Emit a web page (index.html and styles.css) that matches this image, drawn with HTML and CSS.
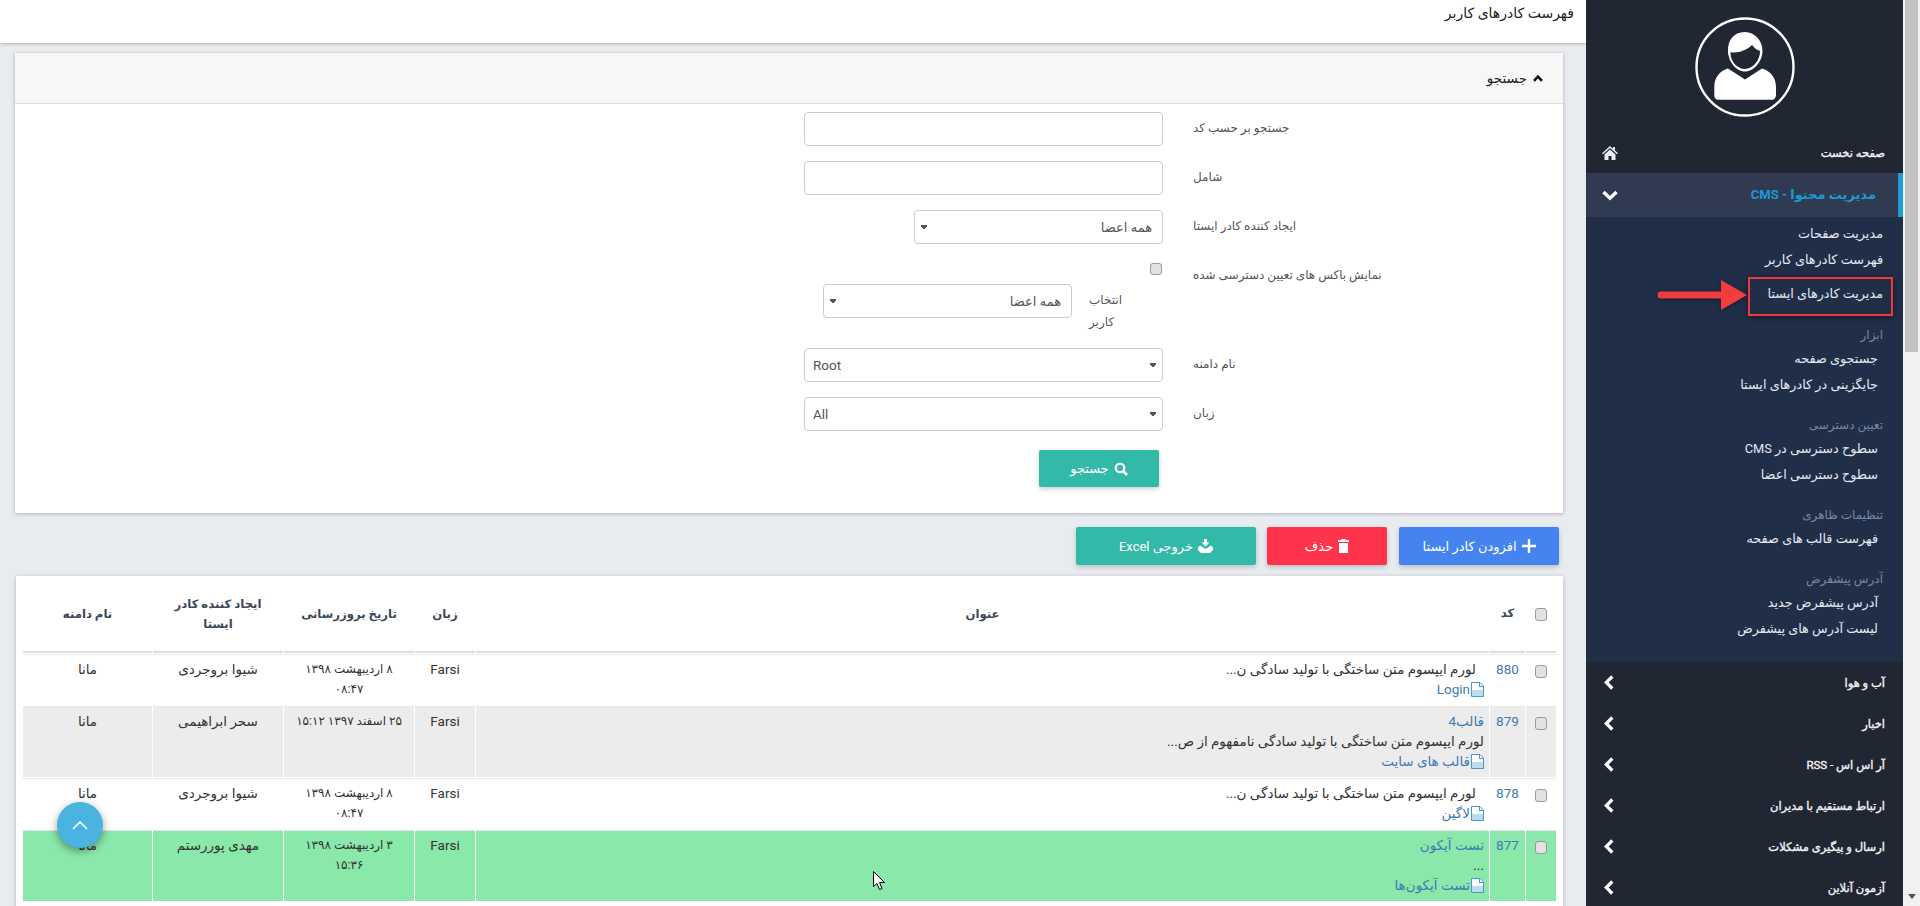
FILE: index.html
```html
<!DOCTYPE html>
<html lang="fa" dir="rtl">
<head>
<meta charset="utf-8">
<title>فهرست کادرهای کاربر</title>
<link rel="stylesheet" href="styles.css">
</head>
<body>
<div class="scrollbar"><div class="thumb"></div><div class="track"></div><div class="scroll-down"></div></div>

<aside class="sidebar">
  <div class="avatar">
    <svg width="100" height="100" viewBox="0 0 100 100"><circle cx="50" cy="50" r="48.5" fill="none" stroke="#fff" stroke-width="2.4"/><path fill="#fff" d="M50 15C38 15 32.7 24 33 34C33 44 41 54.5 50 54.5C59 54.5 67.5 44 67.5 34C67.5 24 60 15 50 15Z"/><path fill="#202632" d="M35.5 35C42 37 52 33 57 28C60 32 63 33 65 34C65.5 43 57.5 52 50 52C42 52 35 44 35.5 35Z"/><path fill="#fff" d="M33 51.5L50 62.6L67 51.5C75 54 81 60 81 70L81 78C81 81 79 82.7 77 82.7L23 82.7C21 82.7 19.3 81 19.3 78L19.3 70C19.3 60 25 54 33 51.5Z"/></svg>
  </div>
  <nav>
    <a class="nav-row"><span>صفحه نخست</span><svg class="nav-icon" width="16" height="14" viewBox="0 0 16 14"><path fill="#e6eef6" d="M8 0L11 2.7V1H13V4.5L16 7.2L15 8.2L8 2L1 8.2L0 7.2ZM8 3.6L13.5 8.4V14H9.5V10H6.5V14H2.5V8.4Z"/></svg></a>
    <a class="nav-row nav-active"><span>مدیریت محتوا - CMS</span><svg class="nav-icon" width="16" height="11" viewBox="0 0 16 11"><path fill="none" stroke="#fff" stroke-width="3.4" d="M1.5 2L8 8.2L14.5 2"/></svg></a>
    <div class="sub">
      <a class="sub-item">مدیریت صفحات</a>
      <a class="sub-item">فهرست کادرهای کاربر</a>
      <a class="sub-item sub-marked">مدیریت کادرهای ایستا</a>
      <div class="sub-group">
        <div class="group-title">ابزار</div>
        <a class="sub-item inset">جستجوی صفحه</a>
        <a class="sub-item inset">جایگزینی در کادرهای ایستا</a>
      </div>
      <div class="sub-group">
        <div class="group-title">تعیین دسترسی</div>
        <a class="sub-item inset">سطوح دسترسی در CMS</a>
        <a class="sub-item inset">سطوح دسترسی اعضا</a>
      </div>
      <div class="sub-group">
        <div class="group-title">تنظیمات ظاهری</div>
        <a class="sub-item inset">فهرست قالب های صفحه</a>
      </div>
      <div class="sub-group">
        <div class="group-title">آدرس پیشفرض</div>
        <a class="sub-item inset">آدرس پیشفرض جدید</a>
        <a class="sub-item inset">لیست آدرس های پیشفرض</a>
      </div>
    </div>
    <a class="nav-row"><span>آب و هوا</span><svg class="nav-icon chev" width="10" height="15" viewBox="0 0 10 15"><path fill="none" stroke="#fff" stroke-width="3.2" d="M8.3 1.5L2.3 7.5L8.3 13.5"/></svg></a>
    <a class="nav-row"><span>اخبار</span><svg class="nav-icon chev" width="10" height="15" viewBox="0 0 10 15"><path fill="none" stroke="#fff" stroke-width="3.2" d="M8.3 1.5L2.3 7.5L8.3 13.5"/></svg></a>
    <a class="nav-row"><span>آر اس اس - RSS</span><svg class="nav-icon chev" width="10" height="15" viewBox="0 0 10 15"><path fill="none" stroke="#fff" stroke-width="3.2" d="M8.3 1.5L2.3 7.5L8.3 13.5"/></svg></a>
    <a class="nav-row"><span>ارتباط مستقیم با مدیران</span><svg class="nav-icon chev" width="10" height="15" viewBox="0 0 10 15"><path fill="none" stroke="#fff" stroke-width="3.2" d="M8.3 1.5L2.3 7.5L8.3 13.5"/></svg></a>
    <a class="nav-row"><span>ارسال و پیگیری مشکلات</span><svg class="nav-icon chev" width="10" height="15" viewBox="0 0 10 15"><path fill="none" stroke="#fff" stroke-width="3.2" d="M8.3 1.5L2.3 7.5L8.3 13.5"/></svg></a>
    <a class="nav-row"><span>آزمون آنلاین</span><svg class="nav-icon chev" width="10" height="15" viewBox="0 0 10 15"><path fill="none" stroke="#fff" stroke-width="3.2" d="M8.3 1.5L2.3 7.5L8.3 13.5"/></svg></a>
  </nav>
  <div class="mark-box"></div>
  <svg class="mark-arrow" width="92" height="32" viewBox="0 0 92 32"><path fill="#f23d3f" d="M5 12.500H65V1L91 16L65 31V19.500H5A3.500 3.500 0 0 1 5 12.500Z"/></svg>
</aside>

<main class="main">
  <header class="page-head">فهرست کادرهای کاربر</header>

  <section class="card search-card">
    <div class="card-head">
      <svg width="10" height="8" viewBox="0 0 10 8"><path fill="none" stroke="#111" stroke-width="2.600" d="M1 6.800L5 2.600L9 6.800"/></svg>
      <span>جستجو</span>
    </div>
    <form class="form">
      <div class="row"><label class="label">جستجو بر حسب کد</label><div class="field"><input class="ctl" type="text"></div></div>
      <div class="row"><label class="label">شامل</label><div class="field"><input class="ctl" type="text"></div></div>
      <div class="row"><label class="label">ایجاد کننده کادر ایستا</label><div class="field"><select class="ctl short"><option>همه اعضا</option></select></div></div>
      <div class="row row-check">
        <label class="label">نمایش باکس های تعیین دسترسی شده</label>
        <div class="field">
          <input class="check form-check" type="checkbox">
          <div class="subrow"><label class="sublabel">انتخاب کاربر</label><select class="ctl short"><option>همه اعضا</option></select></div>
        </div>
      </div>
      <div class="row"><label class="label">نام دامنه</label><div class="field"><select class="ctl ltr"><option>Root</option></select></div></div>
      <div class="row"><label class="label">زبان</label><div class="field"><select class="ctl ltr"><option>All</option></select></div></div>
      <div class="row row-submit"><div class="spacer"></div><div class="field"><button class="btn btn-teal btn-search" type="button"><svg width="14" height="14" viewBox="0 0 14 14"><circle cx="6" cy="6" r="4.300" fill="none" stroke="#fff" stroke-width="2.300"/><path stroke="#fff" stroke-width="2.600" d="M9 9L13 13"/></svg>جستجو</button></div></div>
    </form>
  </section>

  <div class="toolbar">
    <button class="btn btn-blue" type="button"><svg width="14" height="14" viewBox="0 0 14 14"><path stroke="#fff" stroke-width="2.400" d="M7 0V14M0 7H14"/></svg>افزودن کادر ایستا</button>
    <button class="btn btn-red" type="button"><svg width="11" height="14" viewBox="0 0 11 14"><path fill="#fff" d="M3.500 0H7.500V1H11V3H0V1H3.500ZM1 4H10V14H1Z"/></svg>حذف</button>
    <button class="btn btn-teal btn-excel" type="button"><svg width="15" height="14" viewBox="0 0 15 14"><path fill="#fff" d="M6 0H9V3.500H11.500L7.500 7.500L3.500 3.500H6ZM2 6.500L7.500 10L13 6.500L15 8.500V11L12 14H3L0 11V8.500Z"/></svg>خروجی Excel</button>
  </div>

  <section class="card table-card">
    <table class="grid">
      <thead>
        <tr>
          <th class="c-check"><input class="check" type="checkbox"></th>
          <th class="c-code">کد</th>
          <th>عنوان</th>
          <th class="c-lang">زبان</th>
          <th class="c-date">تاریخ بروزرسانی</th>
          <th class="c-user">ایجاد کننده کادر ایستا</th>
          <th class="c-domain">نام دامنه</th>
        </tr>
      </thead>
      <tbody>
        <tr>
          <td class="c-check"><input class="check" type="checkbox"></td>
          <td class="c-code"><a class="link">880</a></td>
          <td class="c-title"><div class="indent">لورم ایپسوم متن ساختگی با تولید سادگی ن...</div><a class="link"><svg class="doc" width="13" height="15" viewBox="0 0 13 15"><path fill="#fff" stroke="#4a97cf" d="M.5.500H9L12.500 4V14.500H.5Z"/><path fill="#bcdcf0" d="M1 8H12V14H1Z"/><path fill="#4a97cf" d="M8 1V5H12V4H9V1Z"/></svg>Login</a></td>
          <td>Farsi</td>
          <td class="c-when">۸ اردیبهشت ۱۳۹۸<br>۰۸:۴۷</td>
          <td>شیوا بروجردی</td>
          <td>مانا</td>
        </tr>
        <tr class="r-gray">
          <td class="c-check"><input class="check" type="checkbox"></td>
          <td class="c-code"><a class="link">879</a></td>
          <td class="c-title"><a class="link">قالب4</a><div>لورم ایپسوم متن ساختگی با تولید سادگی نامفهوم از ص...</div><a class="link"><svg class="doc" width="13" height="15" viewBox="0 0 13 15"><path fill="#fff" stroke="#4a97cf" d="M.5.500H9L12.500 4V14.500H.5Z"/><path fill="#bcdcf0" d="M1 8H12V14H1Z"/><path fill="#4a97cf" d="M8 1V5H12V4H9V1Z"/></svg>قالب های سایت</a></td>
          <td>Farsi</td>
          <td class="c-when">۲۵ اسفند ۱۳۹۷ ۱۵:۱۲</td>
          <td>سحر ابراهیمی</td>
          <td>مانا</td>
        </tr>
        <tr>
          <td class="c-check"><input class="check" type="checkbox"></td>
          <td class="c-code"><a class="link">878</a></td>
          <td class="c-title"><div class="indent">لورم ایپسوم متن ساختگی با تولید سادگی ن...</div><a class="link"><svg class="doc" width="13" height="15" viewBox="0 0 13 15"><path fill="#fff" stroke="#4a97cf" d="M.5.500H9L12.500 4V14.500H.5Z"/><path fill="#bcdcf0" d="M1 8H12V14H1Z"/><path fill="#4a97cf" d="M8 1V5H12V4H9V1Z"/></svg>لاگین</a></td>
          <td>Farsi</td>
          <td class="c-when">۸ اردیبهشت ۱۳۹۸<br>۰۸:۴۷</td>
          <td>شیوا بروجردی</td>
          <td>مانا</td>
        </tr>
        <tr class="r-green">
          <td class="c-check"><input class="check" type="checkbox"></td>
          <td class="c-code"><a class="link">877</a></td>
          <td class="c-title"><a class="link">تست آیکون</a><div>...</div><a class="link"><svg class="doc" width="13" height="15" viewBox="0 0 13 15"><path fill="#fff" stroke="#4a97cf" d="M.5.500H9L12.500 4V14.500H.5Z"/><path fill="#bcdcf0" d="M1 8H12V14H1Z"/><path fill="#4a97cf" d="M8 1V5H12V4H9V1Z"/></svg>تست آیکون‌ها</a></td>
          <td>Farsi</td>
          <td class="c-when">۳ اردیبهشت ۱۳۹۸<br>۱۵:۳۶</td>
          <td>مهدی پوررستم</td>
          <td>مانا</td>
        </tr>
      </tbody>
    </table>
  </section>
</main>

<a class="fab"><svg width="16" height="9" viewBox="0 0 16 9"><path fill="none" stroke="#fff" stroke-width="1.600" d="M1 8L8 1L15 8"/></svg></a>
<svg class="cursor" width="13" height="20" viewBox="0 0 13 20"><path fill="#fff" stroke="#000" d="M.5.500V15.500L4 12.500L6.500 18.500L9 17.500L6.500 11.500H11.500Z"/></svg>
</body>
</html>
```

FILE: styles.css
```css
* { box-sizing: border-box; }
html, body { height: 906px; margin: 0; overflow: hidden; }
body {
  display: flex;
  position: relative;
  background: #e8ebf0;
  font: 12px/20px Roboto, "DejaVu Sans", sans-serif;
  color: #333;
}
a { text-decoration: none; }

/* page scrollbar */
.scrollbar { width: 17px; flex: none; height: 906px; background: #f1f1f1; display: flex; flex-direction: column; align-items: center; }
.thumb { width: 13px; height: 352px; background: #c1c1c1; }
.track { flex: 1; }
.scroll-down { width: 0; height: 0; border: 4px solid transparent; border-top: 5px solid #505050; border-bottom: 0; margin-bottom: 7px; }

/* sidebar */
.sidebar { width: 317px; flex: none; height: 906px; background: #202632; position: relative; overflow: hidden; }
.avatar { height: 132px; padding-top: 17px; display: flex; justify-content: center; }
.nav-row { display: flex; align-items: center; justify-content: space-between; height: 41px; padding: 0 18px 0 14px; color: #f2f4f7; font-size: 11.500px; -webkit-text-stroke: .35px #f2f4f7; }
.nav-icon { margin-left: 2px; }
.chev { margin-left: 4px; }
.nav-active { height: 44px; background: #303a50; border-right: 5px solid #1a9fd0; padding-right: 22px; color: #1a9ad6; font-size: 13px; font-weight: 700; -webkit-text-stroke: 0; }
.sub { height: 445px; background: #212e48; padding-top: 4px; }
.sub-item { display: block; height: 26px; line-height: 26px; padding-right: 20px; color: #e4e9f2; font-size: 12.800px; }
.sub-marked { margin-top: 8px; }
.inset { padding-right: 25px; }
.sub-group { margin-top: 17px; margin-bottom: -1px; }
.group-title { height: 22px; line-height: 22px; padding-right: 20px; color: #7487a8; font-size: 12px; }
.mark-box { position: absolute; right: 10px; top: 277px; width: 145px; height: 39px; border: 2px solid #ea3a40; box-shadow: 0 1px 6px rgba(0,0,0,.5); }
.mark-arrow { position: absolute; right: 155px; top: 279px; filter: drop-shadow(0 1px 2px rgba(0,0,0,.4)); }

/* main */
.main { width: 1586px; flex: none; height: 906px; overflow: hidden; padding: 0 23px 0 23px; }
.page-head { margin: 0 -23px 0 -23px; height: 43px; padding: 3px 12px 0 0; line-height: 20px; background: #fff; box-shadow: 0 1px 3px rgba(0,0,0,.25); color: #222; font-size: 14px; font-weight: 500; }
.card { background: #fff; box-shadow: 0 1px 4px rgba(0,0,0,.25); }
.search-card { margin: 10px 0 0 -8px; height: 460px; }
.card-head { height: 51px; background: #f7f7f7; border-bottom: 1px solid #ddd; display: flex; align-items: center; gap: 6px; padding: 0 20px 0 0; color: #222; font-size: 13.500px; border-radius: 3px 3px 0 0; }
.form { padding-top: 8px; }
.row { display: flex; margin-bottom: 15px; }
.label { width: 370px; flex: none; padding-top: 6px; text-align: left; color: #555; font-size: 12px; }
.field { width: 359px; margin-right: 30px; flex: none; display: flex; flex-direction: column; align-items: flex-start; }
.ctl {
  display: block; width: 100%; height: 34px; border: 1px solid #ccc; border-radius: 4px;
  padding: 6px 10px; color: #555; font: 13px Roboto, "DejaVu Sans", sans-serif;
  appearance: none;
}
input.ctl { background: #fff; }
select.ctl {
  background-color: #fff;
  background-image: linear-gradient(135deg, #555 50%, transparent 50%), linear-gradient(225deg, #555 50%, transparent 50%);
  background-size: 3px 6px, 3px 6px;
  background-repeat: no-repeat;
  background-position: 9px 14px, 6px 14px;
}
.short { width: 249px; }
select.ltr {
  direction: ltr; padding-left: 8px; font-size: 13.500px;
  background-position: calc(100% - 6px) 14px, calc(100% - 9px) 14px;
}
.check { appearance: none; display: inline-block; width: 12px; height: 13px; margin: 0; vertical-align: middle; background: #e2e2e2; border: 1px solid #9a9a9a; border-radius: 3px; }
.form-check { margin: 4px 1px 0 0; }
.row-check { height: 74px; }
.subrow { display: flex; margin-top: 9px; gap: 17px; margin-right: 40px; }
.sublabel { width: 34px; flex: none; text-align: left; color: #555; font-size: 12px; line-height: 22px; padding-top: 5px; }
.row-submit { margin-top: 19px; margin-bottom: 0; }
.spacer { width: 370px; flex: none; }
.btn { display: flex; align-items: center; justify-content: center; gap: 5px; height: 38px; border: 0; border-radius: 2px; color: #fff; font: 13px Roboto, "DejaVu Sans", sans-serif; box-shadow: 0 2px 5px rgba(0,0,0,.2); padding: 0; }
.btn-search { width: 120px; height: 37px; margin-right: 4px; }
.btn-teal { background: #33b9a8; }
.btn-red { background: #fe344d; width: 120px; margin-left: 11px; }
.btn-blue { background: #4584ef; width: 160px; margin-left: 12px; }
.btn-excel { width: 180px; }
.toolbar { display: flex; margin: 14px 4px 0 0; height: 38px; }

/* table */
.table-card { margin: 11px 0 0 -7px; height: 340px; padding: 0 6px; }
.grid { width: 1535px; table-layout: fixed; border-collapse: separate; border-spacing: 1px; font-size: 13.500px; text-align: center; }
.grid th { height: 76px; border-bottom: 2px solid #ddd; color: #3c4858; font-weight: 700; font-size: 11.700px; line-height: 20px; padding: 0 8px; }
.grid td { background: #fff; border-top: 1px solid #e6e6e6; padding: 4px 5px 6px; line-height: 20px; vertical-align: top; height: 50px; }
.c-check { width: 30px; padding: 0 !important; }
.grid td.c-check .check { display: block; margin: 10px auto 0; }
.grid td.c-when { font-size: 12px; padding: 4px 0 6px; }
.c-code { width: 35px; padding: 4px 0 6px !important; }
.c-lang { width: 60px; }
.c-date { width: 130px; }
.c-user { width: 130px; }
.c-domain { width: 129px; }
.grid td.c-title { text-align: right; }
.indent { padding-right: 8px; }
.link { color: #3f7ab5; }
.doc { vertical-align: -3px; margin-left: 1px; }
.r-gray td { background: #ececec; }
.r-green td { background: #8ae8aa; }

/* overlays */
.fab { position: absolute; left: 57px; top: 802px; width: 46px; height: 46px; border-radius: 50%; background: #4ab3e0; box-shadow: 0 3px 8px rgba(0,0,0,.4); display: flex; align-items: center; justify-content: center; }
.cursor { position: absolute; left: 873px; top: 871px; }
```
